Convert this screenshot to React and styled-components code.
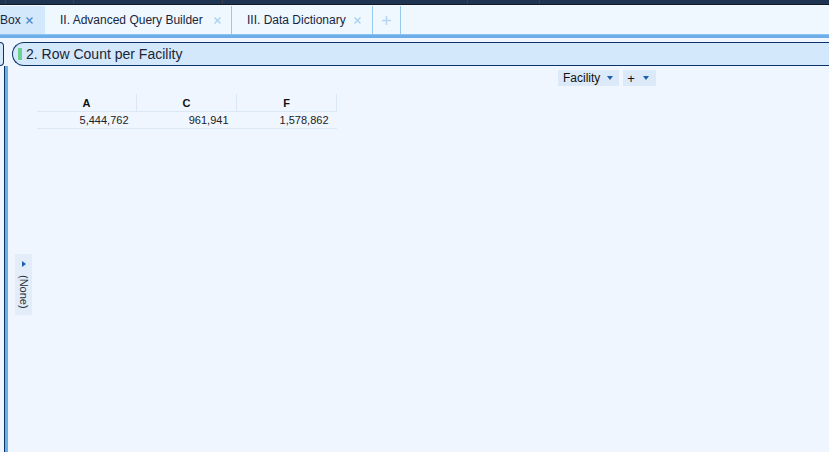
import React from 'react';
import styled, { createGlobalStyle } from 'styled-components';

const Global = createGlobalStyle`
  html, body { margin: 0; padding: 0; }
  body {
    font-family: "Liberation Sans", Arial, sans-serif;
    background: #eff6ff;
    overflow: hidden;
  }
  #root { width: 829px; height: 452px; }
`;

const Screen = styled.div`
  width: 829px;
  height: 452px;
  display: flex;
  flex-direction: column;
  background: #eff6ff;
  overflow: hidden;
`;

const TopStrip = styled.div`
  height: 4px;
  flex: none;
  display: flex;
  background: #1f3450;
  border-bottom: 1px solid #111a26;
`;

const StripCell = styled.div`
  flex: none;
  width: ${p => p.$w}px;
  box-sizing: border-box;
  border-right: 1px solid #3c4148;
`;

const TabBar = styled.div`
  height: 29px;
  flex: none;
  display: flex;
  background: #eff7ff;
`;

const Tab = styled.div`
  flex: none;
  box-sizing: border-box;
  width: ${p => p.$w}px;
  height: 28px;
  margin-top: 1px;
  display: flex;
  align-items: center;
  justify-content: ${p => (p.$center ? 'center' : 'space-between')};
  padding: 0 ${p => p.$pr ?? 0}px 0 ${p => p.$pl ?? 0}px;
  background: ${p => (p.$active ? '#d4e8fb' : 'transparent')};
  border-right: ${p => (p.$sep ? '1px solid #98c9ef' : 'none')};
  font-size: 12px;
  color: #17263d;
  white-space: nowrap;
`;

const Band = styled.div`
  height: 3px;
  flex: none;
  background: #6daee8;
  border-top: 1px solid #8ec4f1;
`;

const Body = styled.div`
  flex: 1;
  display: flex;
  flex-direction: column;
  min-height: 0;
`;

const HeaderRow = styled.div`
  flex: none;
  display: flex;
  padding-top: 4px;
`;

const Stub = styled.div`
  flex: none;
  width: 4px;
  height: 24px;
  box-sizing: border-box;
  border: 1px solid #0b3366;
  border-left: none;
  border-radius: 0 12px 12px 0;
  background: #d4e8fc;
`;

const TitleBar = styled.div`
  flex: 1;
  height: 24px;
  box-sizing: border-box;
  margin-left: 8px;
  border: 1px solid #0b3366;
  border-right: none;
  border-radius: 12px 0 0 12px;
  background: #d4e8fc;
  display: flex;
  align-items: center;
  padding-left: 5px;
`;

const Marker = styled.span`
  width: 4px;
  height: 12px;
  background: #6fd18f;
  margin-right: 4px;
`;

const Title = styled.span`
  font-size: 14px;
  color: #1b2535;
`;

const Content = styled.div`
  flex: 1;
  display: flex;
  margin-left: 4px;
  border-left: 1px solid #0b3366;
  min-height: 0;
`;

const ContentBody = styled.div`
  flex: 1;
  display: flex;
  border-left: 3px solid #6caee8;
`;

const Rail = styled.div`
  flex: none;
  width: 29px;
  box-sizing: border-box;
  padding: 188px 0 0 7px;
`;

const RowStrip = styled.div`
  width: 17px;
  height: 61px;
  background: #e2edf9;
  display: flex;
  flex-direction: column;
  align-items: center;
  padding-top: 7px;
  box-sizing: border-box;
`;

const RightTri = styled.span`
  width: 0;
  height: 0;
  border-top: 3px solid transparent;
  border-bottom: 3px solid transparent;
  border-left: 4px solid #1d5fae;
  margin-left: 1px;
`;

const VerticalLabel = styled.span`
  writing-mode: vertical-rl;
  font-size: 11px;
  color: #2a2f38;
  margin-top: 8px;
`;

const Main = styled.div`
  flex: 1;
  padding-top: 4px;
`;

const PivotRow = styled.div`
  display: flex;
  gap: 4px;
  padding-left: 521px;
`;

const PivotButton = styled.div`
  height: 16px;
  display: flex;
  align-items: center;
  gap: ${p => p.$gap}px;
  padding: 0 ${p => p.$pr}px 0 ${p => p.$pl}px;
  background: #dbe9f9;
  font-size: ${p => p.$fs}px;
  color: #111;
`;

const DownTri = styled.span`
  width: 0;
  height: 0;
  border-left: 3.5px solid transparent;
  border-right: 3.5px solid transparent;
  border-top: 4px solid #1d5fae;
`;

const Table = styled.table`
  margin-top: 8px;
  border-collapse: collapse;
  table-layout: fixed;
  font-size: 11px;
`;

const Th = styled.th`
  width: 99px;
  height: 17px;
  padding: 0;
  font-weight: bold;
  color: #111;
  text-align: center;
  border-right: 1px solid #dbe7f4;
  border-bottom: 1px solid #dbe7f4;
`;

const Td = styled.td`
  height: 16px;
  padding: 0 8px 0 0;
  text-align: right;
  color: #222;
  border-bottom: 1px solid #dbe7f4;
`;

const Close = ({ dark }) => (
  <svg width="7" height="7" viewBox="0 0 7 7">
    <path d="M0.5 0.5L6.5 6.5M6.5 0.5L0.5 6.5" stroke={dark ? '#4a86cc' : '#a9cff0'} strokeWidth="1.3" fill="none" />
  </svg>
);

const Plus = () => (
  <svg width="9" height="9" viewBox="0 0 9 9">
    <path d="M4.5 0V9M0 4.5H9" stroke="#b5d5f2" strokeWidth="1.5" fill="none" />
  </svg>
);

const strip = [6, 68, 149, 245, 72];

export default function App() {
  return (
    <Screen>
      <Global />
      <TopStrip>
        {strip.map((w, i) => (
          <StripCell key={i} $w={w} />
        ))}
      </TopStrip>
      <TabBar>
        <Tab $w={45} $active $pl={0} $pr={12}>
          <span>Box</span>
          <Close dark />
        </Tab>
        <Tab $w={187} $sep $pl={15} $pr={10}>
          <span>II. Advanced Query Builder</span>
          <Close />
        </Tab>
        <Tab $w={141} $sep $pl={15} $pr={11}>
          <span>III. Data Dictionary</span>
          <Close />
        </Tab>
        <Tab $w={28} $sep $center>
          <Plus />
        </Tab>
      </TabBar>
      <Band />
      <Body>
        <HeaderRow>
          <Stub />
          <TitleBar>
            <Marker />
            <Title>2. Row Count per Facility</Title>
          </TitleBar>
        </HeaderRow>
        <Content>
          <ContentBody>
            <Rail>
              <RowStrip>
                <RightTri />
                <VerticalLabel>(None)</VerticalLabel>
              </RowStrip>
            </Rail>
            <Main>
              <PivotRow>
                <PivotButton $pl={5} $pr={6} $gap={7} $fs={12}>
                  <span>Facility</span>
                  <DownTri />
                </PivotButton>
                <PivotButton $pl={4} $pr={7} $gap={8} $fs={13}>
                  <span>+</span>
                  <DownTri />
                </PivotButton>
              </PivotRow>
              <Table>
                <thead>
                  <tr>
                    <Th>A</Th>
                    <Th>C</Th>
                    <Th>F</Th>
                  </tr>
                </thead>
                <tbody>
                  <tr>
                    <Td>5,444,762</Td>
                    <Td>961,941</Td>
                    <Td>1,578,862</Td>
                  </tr>
                </tbody>
              </Table>
            </Main>
          </ContentBody>
        </Content>
      </Body>
    </Screen>
  );
}
